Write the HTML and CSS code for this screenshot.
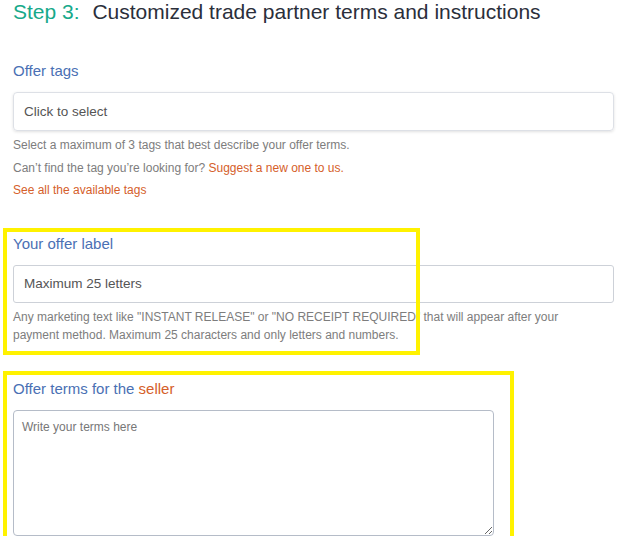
FILE: index.html
```html
<!DOCTYPE html>
<html lang="en">
  <head>
    <meta charset="UTF-8" />
    <title>Step 3: Customized trade partner terms and instructions</title>
    <link rel="stylesheet" href="styles.css">
  </head>
  <body>
    <main id="wrapper">
      <h2 class="step-title"><span class="step-num">Step 3:</span> Customized trade partner terms and instructions</h2>

      <section class="field field-tags">
        <label class="field-label">Offer tags</label>
        <div class="select-box">Click to select</div>
        <p class="help">Select a maximum of 3 tags that best describe your offer terms.</p>
        <p class="help">Can’t find the tag you’re looking for? <a href="#" class="link">Suggest a new one to us.</a></p>
        <p class="help"><a href="#" class="link">See all the available tags</a></p>
      </section>

      <section class="field field-label-text">
        <div class="highlight highlight-label"></div>
        <label class="field-label" for="offer-label">Your offer label</label>
        <input type="text" id="offer-label" class="text-input" placeholder="Maximum 25 letters" />
        <p class="help help-tight">Any marketing text like "INSTANT RELEASE" or "NO RECEIPT REQUIRED" that will appear after your payment method. Maximum 25 characters and only letters and numbers.</p>
      </section>

      <section class="field field-terms">
        <div class="highlight highlight-terms"></div>
        <label class="field-label" for="offer-terms">Offer terms for the <span class="accent">seller</span></label>
        <textarea id="offer-terms" class="terms-input" placeholder="Write your terms here"></textarea>
      </section>
    </main>
  </body>
</html>
```

FILE: styles.css
```css
body {
  margin: 0;
  padding: 0;
  background-color: #fff;
  font-family: "Liberation Sans", Arial, sans-serif;
  color: #555;
}

main {
  padding: 0 13px;
}

.step-title {
  margin: 0;
  font-size: 21px;
  line-height: 24px;
  font-weight: normal;
  color: #2b2f3b;
}

.step-num {
  color: #17a98a;
  margin-right: 7px;
}

.field {
  position: relative;
}

.field-tags {
  margin-top: 37px;
}

.field-label-text {
  margin-top: 32px;
}

.field-terms {
  margin-top: 35px;
}

.field-label {
  display: block;
  font-size: 15px;
  line-height: 20px;
  color: #4a70b4;
  margin-bottom: 11px;
}

.accent {
  color: #d5602a;
}

.select-box {
  box-sizing: border-box;
  width: 601px;
  height: 39px;
  padding: 0 10px;
  border: 1px solid #dde0e6;
  border-radius: 4px;
  box-shadow: 0 1px 3px rgba(0, 0, 0, 0.12);
  font-size: 13.5px;
  line-height: 37px;
  color: #555;
}

.help {
  margin: 0;
  font-size: 12px;
  line-height: 22.5px;
  color: #7d7d7d;
}

.select-box + .help {
  margin-top: 3px;
}

.help-tight {
  margin-top: 5px;
  line-height: 18px;
  width: 565px;
}

.link {
  color: #d5602a;
  text-decoration: none;
}

.text-input {
  box-sizing: border-box;
  display: block;
  width: 601px;
  height: 38px;
  padding: 0 10px;
  border: 1px solid #cdd1d8;
  border-radius: 3px;
  font-family: inherit;
  font-size: 13.5px;
  color: #555;
}

.text-input::placeholder {
  color: #555;
}

.terms-input {
  box-sizing: border-box;
  display: block;
  width: 481px;
  height: 126px;
  padding: 9px 8px;
  border: 1px solid #b5bcc8;
  border-radius: 4px;
  font-family: inherit;
  font-size: 12px;
  color: #555;
  resize: vertical;
}

.terms-input::placeholder {
  color: #777;
}

/* annotation boxes drawn over the form */
.highlight {
  position: absolute;
  box-sizing: border-box;
  border: 4px solid #fff200;
  pointer-events: none;
  z-index: 2;
}

.highlight-label {
  left: -10px;
  top: -6px;
  width: 417px;
  height: 127px;
}

.highlight-terms {
  left: -10px;
  top: -8px;
  width: 511px;
  height: 169px;
}
```
